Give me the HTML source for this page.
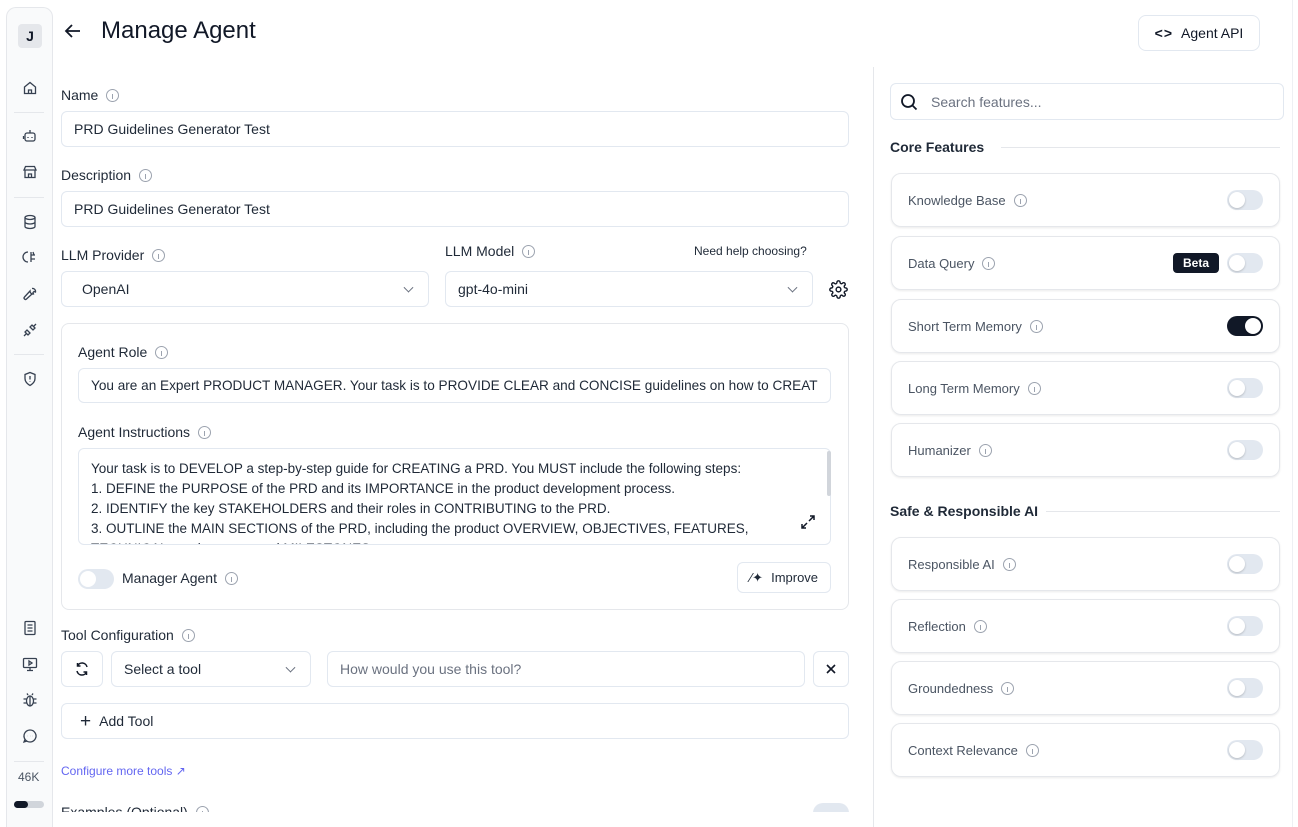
<!DOCTYPE html>
<html><head><meta charset="utf-8"><style>
*{box-sizing:border-box;margin:0;padding:0}
html,body{width:1298px;height:827px;overflow:hidden}
body{background:#fff;font-family:"Liberation Sans",sans-serif;color:#111827;position:relative;font-size:14px}
.a{position:absolute}
.side{left:6px;top:7px;width:47px;height:820px;background:#f9fafb;border:1px solid #e5e7eb;border-bottom:none;border-radius:10px 10px 0 0}
.ic{position:absolute;left:30px;transform:translate(-50%,-50%);width:16px;height:16px}
.sep{position:absolute;left:14px;width:30px;height:1px;background:#e5e7eb}
.lbl{position:absolute;font-size:14px;color:#1f2937}
.inf{display:inline-block;width:13px;height:13px;border:1px solid #9ca3af;border-radius:50%;vertical-align:-2px;margin-left:8px;position:relative}
.inf:after{content:"";position:absolute;left:5px;top:4px;width:1px;height:5px;background:#9ca3af}
.box{position:absolute;border:1px solid #e2e8f0;border-radius:6px;background:#fff;font-size:14px;color:#1f2937;padding-left:12px;display:flex;align-items:center}
.chev{position:absolute;right:16px;top:50%;width:7px;height:7px;border-right:1.3px solid #6b7280;border-bottom:1.3px solid #6b7280;transform:translateY(-70%) rotate(45deg)}
.card{position:absolute;left:891px;width:389px;height:54px;border:1px solid #e5e7eb;border-radius:10px;box-shadow:0 1px 2px rgba(0,0,0,.08);font-size:13px;color:#4b5563;padding-left:16px;display:flex;align-items:center}
.tg{position:absolute;right:16px;top:16px;width:36px;height:20px;border-radius:10px;background:#e2e8f0}
.tg:after{content:"";position:absolute;left:2px;top:2px;width:16px;height:16px;border-radius:50%;background:#fff;box-shadow:0 1px 2px rgba(0,0,0,.2)}
.tg.on{background:#111827}.tg.on:after{left:18px}
</style></head><body>
<div class="a side"></div>
<div class="a" style="left:18px;top:24px;width:24px;height:24px;background:#e5e7eb;border-radius:4px;font-weight:bold;font-size:14px;text-align:center;line-height:24px">J</div>
<svg class="ic" style="top:88px" viewBox="0 0 16 16" fill="none" stroke="#374151" stroke-width="1.3"><path d="M2.5 7L8 2.5 13.5 7v6.5h-11z M6.5 13.5V10h3v3.5"/></svg>
<div class="sep" style="top:112px"></div>
<svg class="ic" style="top:136px" viewBox="0 0 16 16" fill="none" stroke="#374151" stroke-width="1.3"><rect x="3" y="5" width="10" height="8" rx="2"/><path d="M8 5V2M6 9v1M10 9v1M1.5 8v3"/></svg>
<svg class="ic" style="top:172px" viewBox="0 0 16 16" fill="none" stroke="#374151" stroke-width="1.3"><path d="M2 6l1.5-3.5h9L14 6H2zM3 6v7.5h10V6M6.5 13.5V10h3v3.5"/></svg>
<div class="sep" style="top:197px"></div>
<svg class="ic" style="top:222px" viewBox="0 0 16 16" fill="none" stroke="#374151" stroke-width="1.3"><ellipse cx="8" cy="3.5" rx="5" ry="2"/><path d="M3 3.5v9c0 1.1 2.2 2 5 2s5-.9 5-2v-9M3 8c0 1.1 2.2 2 5 2s5-.9 5-2"/></svg>
<svg class="ic" style="top:257px" viewBox="0 0 16 16" fill="none" stroke="#374151" stroke-width="1.3"><path d="M6 3a4 4 0 000 10M9 3v10M9 6h4M9 10h4M11 3l1 3"/></svg>
<svg class="ic" style="top:294px" viewBox="0 0 16 16" fill="none" stroke="#374151" stroke-width="1.3"><path d="M10 2.5a3 3 0 013.5 3.5l-1.5-.5-1 1 .5 1.5A3 3 0 018 5L2.5 11a1 1 0 002 2L10 8"/></svg>
<svg class="ic" style="top:330px" viewBox="0 0 16 16" fill="none" stroke="#374151" stroke-width="1.3"><path d="M2 14l3-3M11 5l3-3M5 8l3 3-2 2-3-3zM8 5l3 3 2-2-3-3z"/></svg>
<div class="sep" style="top:354px"></div>
<svg class="ic" style="top:379px" viewBox="0 0 16 16" fill="none" stroke="#374151" stroke-width="1.3"><path d="M8 1.5l5 2v4c0 3.5-2.5 5.5-5 7-2.5-1.5-5-3.5-5-7v-4z M8 5v3.5M8 10.5v.5"/></svg>
<svg class="ic" style="top:628px" viewBox="0 0 16 16" fill="none" stroke="#374151" stroke-width="1.3"><rect x="3" y="1.5" width="10" height="13" rx="1"/><path d="M5.5 5h5M5.5 8h5M5.5 11h5"/></svg>
<svg class="ic" style="top:664px" viewBox="0 0 16 16" fill="none" stroke="#374151" stroke-width="1.3"><rect x="1.5" y="2.5" width="13" height="9" rx="1"/><path d="M8 11.5v3M5 14.5h6M7 5v4l3-2z"/></svg>
<svg class="ic" style="top:700px" viewBox="0 0 16 16" fill="none" stroke="#374151" stroke-width="1.3"><ellipse cx="8" cy="9" rx="3.5" ry="5"/><path d="M6 3l-1-1.5M10 3l1-1.5M4.5 7H1.5M4.5 11h-3M11.5 7h3M11.5 11h3M8 4v10"/></svg>
<svg class="ic" style="top:736px" viewBox="0 0 16 16" fill="none" stroke="#374151" stroke-width="1.3"><path d="M8 2a6 6 0 11-5 9.3L2 14l2.8-.9A6 6 0 018 2z"/><path d="M5.5 8h.1M8 8h.1M10.5 8h.1" stroke-width="1.6"/></svg>
<div class="sep" style="top:761px"></div>
<div class="a" style="left:18px;top:770px;font-size:12px;color:#4b5563">46K</div>
<div class="a" style="left:14px;top:801px;width:30px;height:7px;background:#d1d5db;border-radius:4px"><div style="width:14px;height:7px;background:#111827;border-radius:4px"></div></div>

<svg class="a" style="left:63px;top:21px" width="20" height="20" viewBox="0 0 20 20" fill="none" stroke="#111827" stroke-width="1.8"><path d="M17 10H3M9 4l-6 6 6 6"/></svg>
<div class="a" style="left:101px;top:17px;font-size:24px;color:#111827">Manage Agent</div>
<div class="box" style="left:1138px;top:15px;width:122px;height:36px;justify-content:center;padding:0;border-radius:8px;color:#111827"><span style="font-weight:bold;margin-right:8px;letter-spacing:1px">&lt;&gt;</span>Agent API</div>

<div class="lbl" style="left:61px;top:87px">Name<span class="inf"></span></div>
<div class="box" style="left:61px;top:111px;width:788px;height:36px">PRD Guidelines Generator Test</div>
<div class="lbl" style="left:61px;top:167px">Description<span class="inf"></span></div>
<div class="box" style="left:61px;top:191px;width:788px;height:36px">PRD Guidelines Generator Test</div>
<div class="lbl" style="left:61px;top:247px">LLM Provider<span class="inf"></span></div>
<div class="lbl" style="left:445px;top:243px">LLM Model<span class="inf"></span></div>
<div class="a" style="left:694px;top:244px;font-size:12px;color:#1f2937">Need help choosing?</div>
<div class="box" style="left:61px;top:271px;width:368px;height:36px;padding-left:20px">OpenAI<span class="chev"></span></div>
<div class="box" style="left:445px;top:271px;width:368px;height:36px">gpt-4o-mini<span class="chev"></span></div>
<svg class="a" style="left:829px;top:280px" width="19" height="19" viewBox="0 0 24 24" fill="none" stroke="#111827" stroke-width="1.8"><circle cx="12" cy="12" r="3"/><path d="M19.4 15a1.7 1.7 0 00.3 1.8l.1.1a2 2 0 11-2.8 2.8l-.1-.1a1.7 1.7 0 00-1.8-.3 1.7 1.7 0 00-1 1.5V21a2 2 0 11-4 0v-.1a1.7 1.7 0 00-1.1-1.5 1.7 1.7 0 00-1.8.3l-.1.1a2 2 0 11-2.8-2.8l.1-.1a1.7 1.7 0 00.3-1.8 1.7 1.7 0 00-1.5-1H3a2 2 0 110-4h.1a1.7 1.7 0 001.5-1.1 1.7 1.7 0 00-.3-1.8l-.1-.1a2 2 0 112.8-2.8l.1.1a1.7 1.7 0 001.8.3H9a1.7 1.7 0 001-1.5V3a2 2 0 114 0v.1a1.7 1.7 0 001 1.5 1.7 1.7 0 001.8-.3l.1-.1a2 2 0 112.8 2.8l-.1.1a1.7 1.7 0 00-.3 1.8V9a1.7 1.7 0 001.5 1H21a2 2 0 110 4h-.1a1.7 1.7 0 00-1.5 1z"/></svg>

<div class="a" style="left:61px;top:323px;width:788px;height:287px;border:1px solid #e5e7eb;border-radius:8px"></div>
<div class="lbl" style="left:78px;top:344px">Agent Role<span class="inf"></span></div>
<div class="box" style="left:78px;top:368px;width:753px;height:35px;overflow:hidden;white-space:nowrap;font-size:13.6px">You are an Expert PRODUCT MANAGER. Your task is to PROVIDE CLEAR and CONCISE guidelines on how to CREAT</div>
<div class="lbl" style="left:78px;top:424px">Agent Instructions<span class="inf"></span></div>
<div class="box" style="left:78px;top:448px;width:753px;height:97px;display:block;padding:10px 12px 0;line-height:20px;overflow:hidden;font-size:13.5px">Your task is to DEVELOP a step-by-step guide for CREATING a PRD. You MUST include the following steps:<br>1. DEFINE the PURPOSE of the PRD and its IMPORTANCE in the product development process.<br>2. IDENTIFY the key STAKEHOLDERS and their roles in CONTRIBUTING to the PRD.<br>3. OUTLINE the MAIN SECTIONS of the PRD, including the product OVERVIEW, OBJECTIVES, FEATURES,<br>TECHNICAL requirements, and MILESTONES.</div>
<div class="a" style="left:827px;top:451px;width:4px;height:45px;background:#d1d5db;border-radius:2px"></div>
<svg class="a" style="left:800px;top:514px" width="16" height="16" viewBox="0 0 16 16" fill="none" stroke="#111827" stroke-width="1.5"><path d="M10 2h4v4M14 2l-5 5M6 14H2v-4M2 14l5-5"/></svg>
<div class="a" style="left:78px;top:569px;width:36px;height:20px;border-radius:10px;background:#e2e8f0"><div style="margin:2px;width:16px;height:16px;border-radius:50%;background:#fff"></div></div>
<div class="lbl" style="left:122px;top:570px">Manager Agent<span class="inf"></span></div>
<div class="box" style="left:737px;top:562px;width:94px;height:31px;font-size:13px;padding-left:12px"><span style="margin-right:8px">⁄✦</span>Improve</div>

<div class="lbl" style="left:61px;top:627px">Tool Configuration<span class="inf"></span></div>
<div class="box" style="left:61px;top:651px;width:42px;height:36px;justify-content:center;padding:0"><svg width="16" height="16" viewBox="0 0 16 16" fill="none" stroke="#111827" stroke-width="1.5"><path d="M13 6a5 5 0 00-9.5-1M3 10a5 5 0 009.5 1M3.5 2v3h3M12.5 14v-3h-3"/></svg></div>
<div class="box" style="left:111px;top:651px;width:200px;height:36px">Select a tool<span class="chev"></span></div>
<div class="box" style="left:327px;top:651px;width:478px;height:36px;color:#6b7280">How would you use this tool?</div>
<div class="box" style="left:813px;top:651px;width:36px;height:36px;justify-content:center;padding:0"><svg width="12" height="12" viewBox="0 0 12 12" stroke="#111827" stroke-width="1.6"><path d="M2 2l8 8M10 2l-8 8"/></svg></div>
<div class="box" style="left:61px;top:703px;width:788px;height:36px;padding-left:18px"><span style="font-size:19px;margin-right:8px;line-height:1">+</span>Add Tool</div>
<div class="a" style="left:61px;top:764px;font-size:12px;color:#6366f1">Configure more tools ↗</div>
<div class="a" style="left:61px;top:803px;height:9px;overflow:hidden;font-size:14px;color:#1f2937;line-height:18px">Examples (Optional)<span class="inf"></span></div>
<div class="a" style="left:813px;top:803px;width:36px;height:9px;overflow:hidden"><div style="width:36px;height:20px;border-radius:10px;background:#e2e8f0"></div></div>

<div class="a" style="left:873px;top:67px;width:1px;height:760px;background:#e5e7eb"></div>
<div class="a" style="left:1292px;top:0;width:1px;height:827px;background:#eef0f3"></div>
<div class="box" style="left:890px;top:83px;width:394px;height:37px;padding-left:40px;color:#6b7280">Search features...</div>
<svg class="a" style="left:900px;top:93px" width="18" height="18" viewBox="0 0 18 18" fill="none" stroke="#111827" stroke-width="1.8"><circle cx="8" cy="8" r="6"/><path d="M12.5 12.5l4 4"/></svg>
<div class="a" style="left:890px;top:139px;font-size:14px;font-weight:bold;color:#1f2937">Core Features</div>
<div class="a" style="left:1001px;top:147px;width:279px;height:1px;background:#e5e7eb"></div>
<div class="card" style="top:173px">Knowledge Base<span class="inf"></span><span class="tg"></span></div>
<div class="card" style="top:236px">Data Query<span class="inf"></span><span class="a" style="right:60px;top:16px;background:#111827;color:#fff;font-size:12px;font-weight:bold;padding:3px 10px;border-radius:4px">Beta</span><span class="tg"></span></div>
<div class="card" style="top:299px">Short Term Memory<span class="inf"></span><span class="tg on"></span></div>
<div class="card" style="top:361px">Long Term Memory<span class="inf"></span><span class="tg"></span></div>
<div class="card" style="top:423px">Humanizer<span class="inf"></span><span class="tg"></span></div>
<div class="a" style="left:890px;top:503px;font-size:14px;font-weight:bold;color:#1f2937">Safe &amp; Responsible AI</div>
<div class="a" style="left:1046px;top:511px;width:234px;height:1px;background:#e5e7eb"></div>
<div class="card" style="top:537px">Responsible AI<span class="inf"></span><span class="tg"></span></div>
<div class="card" style="top:599px">Reflection<span class="inf"></span><span class="tg"></span></div>
<div class="card" style="top:661px">Groundedness<span class="inf"></span><span class="tg"></span></div>
<div class="card" style="top:723px">Context Relevance<span class="inf"></span><span class="tg"></span></div>
</body></html>
